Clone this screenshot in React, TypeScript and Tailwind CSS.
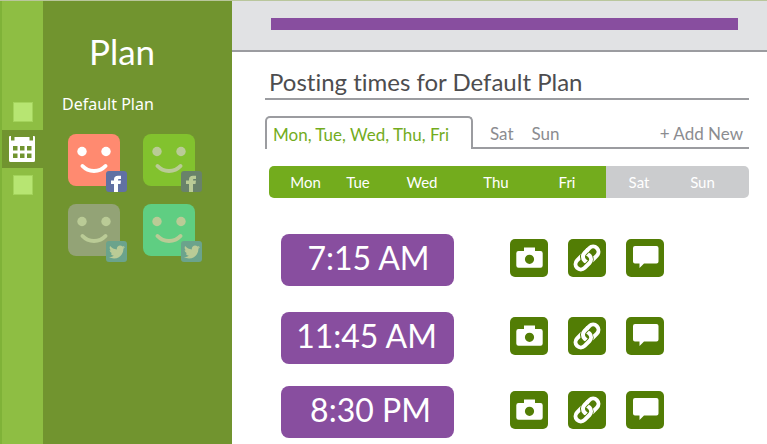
import { FaTwitter } from "react-icons/fa";

type Network = "facebook" | "twitter";

interface Account {
  id: number;
  name: string;
  network: Network;
  tile: string;
  badge: string;
  active: boolean;
}

const accounts: Account[] = [
  { id: 1, name: "Red account", network: "facebook", tile: "bg-[#ff8a70]", badge: "bg-[#6171a3]", active: true },
  { id: 2, name: "Green account", network: "facebook", tile: "bg-[#82c22e]", badge: "bg-[#69826a]", active: false },
  { id: 3, name: "Grey account", network: "twitter", tile: "bg-[#93a376]", badge: "bg-[#6ba38c]", active: false },
  { id: 4, name: "Teal account", network: "twitter", tile: "bg-[#5fce82]", badge: "bg-[#6ba38c]", active: false },
];

const days = [
  { label: "Mon", cell: "w-[61px] pl-3 bg-[#73ac1d] rounded-l-[5px]" },
  { label: "Tue", cell: "w-[56px] bg-[#73ac1d]" },
  { label: "Wed", cell: "w-[72px] bg-[#73ac1d]" },
  { label: "Thu", cell: "w-[76px] bg-[#73ac1d]" },
  { label: "Fri", cell: "w-[72px] pr-1.5 bg-[#73ac1d]" },
  { label: "Sat", cell: "w-[66px] bg-[#cbccce]" },
  { label: "Sun", cell: "flex-1 pr-4 bg-[#cbccce] rounded-r-[5px]" },
];

const slots = [
  { time: "7:15 AM", row: "mt-9", text: "pr-0.5 pl-1" },
  { time: "11:45 AM", row: "mt-[26px]", text: "pr-0.5" },
  { time: "8:30 PM", row: "mt-[22px]", text: "pr-0.5 pl-2" },
];

const CalendarIcon = () => (
  <svg viewBox="0 0 26 26" className="h-[26px] w-[26px]" aria-hidden="true">
    <path
      fill="#fff"
      fillRule="evenodd"
      d="M0 1a1 1 0 0 1 1-1h1V4.500h3.500V1h15v3.500H24V0h1a1 1 0 0 1 1 1v23.500a1.500 1.500 0 0 1-1.500 1.500h-23A1.500 1.500 0 0 1 0 24.500zM4 10v4.500h4.500V10zm7 0v4.500h4.500V10zm7 0v4.500h4.500V10zM4 17.500V22h4.500v-4.500zm7 0V22h4.500v-4.500zm7 0V22h4.500v-4.500z"
    />
  </svg>
);

const CameraIcon = () => (
  <svg viewBox="0 0 38 38" className="h-full w-full" aria-hidden="true">
    <path
      fill="#fff"
      fillRule="evenodd"
      d="M8.500 12H14V8.500h11V12h5.500A2.200 2.200 0 0 1 32.700 14.200v12.300a2.200 2.200 0 0 1-2.200 2.200h-22a2.200 2.200 0 0 1-2.200-2.200V14.200A2.200 2.200 0 0 1 8.500 12zm11 3.700a4.600 4.600 0 1 0 0 9.200 4.600 4.600 0 0 0 0-9.200z"
    />
  </svg>
);

const LinkIcon = () => (
  <svg viewBox="0 0 38 38" className="h-full w-full" fill="none" aria-hidden="true">
    <g transform="rotate(-45 19 19)">
      <rect x="15.500" y="13.700" width="17.500" height="10.600" rx="5.300" stroke="#fff" strokeWidth="4" />
      <path d="M10 24.300h6.700a5.300 5.300 0 0 0 5.300-5.300" stroke="#527d05" strokeWidth="6" />
      <rect x="5" y="13.700" width="17.500" height="10.600" rx="5.300" stroke="#fff" strokeWidth="4" />
      <path d="M15.500 20V19a5.300 5.300 0 0 1 5.300-5.300h3.200" stroke="#527d05" strokeWidth="6" />
      <path d="M15.500 21V19a5.300 5.300 0 0 1 5.300-5.300h5" stroke="#fff" strokeWidth="4" />
    </g>
  </svg>
);

const CommentIcon = () => (
  <svg viewBox="0 0 38 38" className="h-full w-full" aria-hidden="true">
    <path
      fill="#fff"
      d="M9 7h21.500A2 2 0 0 1 32.500 9v13.500a2 2 0 0 1-2 2H18L13.500 29v-4.500H9a2 2 0 0 1-2-2V9a2 2 0 0 1 2-2z"
    />
  </svg>
);

const actions = [
  { label: "Add photo", Icon: CameraIcon },
  { label: "Add link", Icon: LinkIcon },
  { label: "Add comment", Icon: CommentIcon },
];

// Facebook mark sits on the badge's bottom edge
const FacebookBadge = () => (
  <svg viewBox="0 0 21 21" className="h-full w-full" fill="currentColor" aria-hidden="true">
    <path d="M8 21v-8H5V9.500h3V8.500C8 6 9.500 4.800 12 4.800h3V8h-1.800C12.300 8 12 8.400 12 9.200v.300h3L14.500 13H12v8z" />
  </svg>
);
const TwitterBadge = () => <FaTwitter className="h-4 w-4" />;

const AccountTile = ({ account }: { account: Account }) => {
  const Logo = account.network === "facebook" ? FacebookBadge : TwitterBadge;
  const ink = account.active ? "text-white" : "text-[#bacb96]";

  return (
    <button
      aria-label={account.name}
      className={`relative h-[52px] w-[52px] rounded-lg ${account.tile} ${ink}`}
    >
      <svg viewBox="0 0 52 52" className="h-full w-full" aria-hidden="true">
        <circle cx="14" cy="17.500" r="4.700" fill="currentColor" />
        <circle cx="38" cy="17.500" r="4.700" fill="currentColor" />
        <path
          d="M14.500 32c6 6.500 17 6.500 23 0"
          fill="none"
          stroke="currentColor"
          strokeWidth="4"
          strokeLinecap="round"
        />
      </svg>
      <span
        className={`absolute -right-[7px] -bottom-1.5 flex h-[21px] w-[21px] items-center justify-center overflow-hidden rounded-[3px] ${account.badge}`}
      >
        <Logo />
      </span>
    </button>
  );
};

const Rail = () => (
  <nav className="flex w-[43px] shrink-0 flex-col items-center border-l-2 border-[#7fb238] bg-[#8ebe43] pt-[101px]">
    <button aria-label="Dashboard" className="h-5 w-5 border border-[#a3d35b] bg-[#b7e572]" />
    <button
      aria-label="Calendar"
      className="mt-2 flex h-[38px] w-full items-center justify-center bg-[#71942f] pr-0.5"
    >
      <CalendarIcon />
    </button>
    <button aria-label="Settings" className="mt-[7px] h-5 w-5 border border-[#a3d35b] bg-[#b7e572]" />
  </nav>
);

const Sidebar = () => (
  <aside className="w-[189px] shrink-0 bg-[#71942f] px-5 pt-[26px] text-white">
    <h1 className="px-[26px] text-[35px] leading-[48px]">Plan</h1>
    <h2 className="mt-[17px] -ml-px font-['Noto_Sans',sans-serif] text-base leading-6">
      Default Plan
    </h2>
    <div className="mt-[18px] ml-[5px] grid grid-cols-[52px_52px] gap-x-[23px] gap-y-[18px]">
      {accounts.map((account) => (
        <AccountTile key={account.id} account={account} />
      ))}
    </div>
  </aside>
);

export default function App() {
  return (
    <div className="flex min-h-screen border-t border-[#b9c69c] bg-white font-['Lato',sans-serif] [font-variant-ligatures:none]">
      <Rail />
      <Sidebar />
      <main className="min-w-0 flex-1">
        <header className="border-b-2 border-[#9b9ca0] bg-[#e1e2e4] pt-[17px] pr-[29px] pb-5 pl-[39px]">
          <div className="h-3 bg-[#884e9f]" />
        </header>

        <div className="pr-[18px] pl-[33px]">
          <h2 className="mt-3.5 border-b-2 border-[#9b9ca0] pl-1 text-2xl leading-8 text-[#4d4d4f]">
            Posting times for Default Plan
          </h2>

          <div className="mt-4 flex text-[17px] leading-6 text-[#8b8c90]">
            <button className="h-[33px] w-[208px] rounded-t-[5px] border-2 border-b-0 border-[#9b9ca0] pt-0.5 pl-1.5 text-left whitespace-nowrap text-[#73ac1d]">
              Mon, Tue, Wed, Thu, Fri
            </button>
            <div className="flex flex-1 border-b-2 border-[#9b9ca0] pt-1 pr-1.5 pl-[17px]">
              <button>Sat</button>
              <button className="ml-[18px]">Sun</button>
              <button className="ml-auto">+ Add New</button>
            </div>
          </div>

          <div className="mt-[17px] ml-1 flex h-8 text-[15px] text-white">
            {days.map((day) => (
              <button key={day.label} className={day.cell}>
                {day.label}
              </button>
            ))}
          </div>

          {slots.map((slot) => (
            <div key={slot.time} className={`flex items-start pl-4 ${slot.row}`}>
              <button
                className={`h-[52px] w-[173px] rounded-lg bg-[#884e9f] pb-1 text-[32px] leading-[48px] text-white ${slot.text}`}
              >
                {slot.time}
              </button>
              <div className="mt-[5px] ml-14 flex gap-5">
                {actions.map(({ label, Icon }) => (
                  <button
                    key={label}
                    aria-label={label}
                    className="h-[38px] w-[38px] rounded-[5px] bg-[#527d05]"
                  >
                    <Icon />
                  </button>
                ))}
              </div>
            </div>
          ))}
        </div>
      </main>
    </div>
  );
}
